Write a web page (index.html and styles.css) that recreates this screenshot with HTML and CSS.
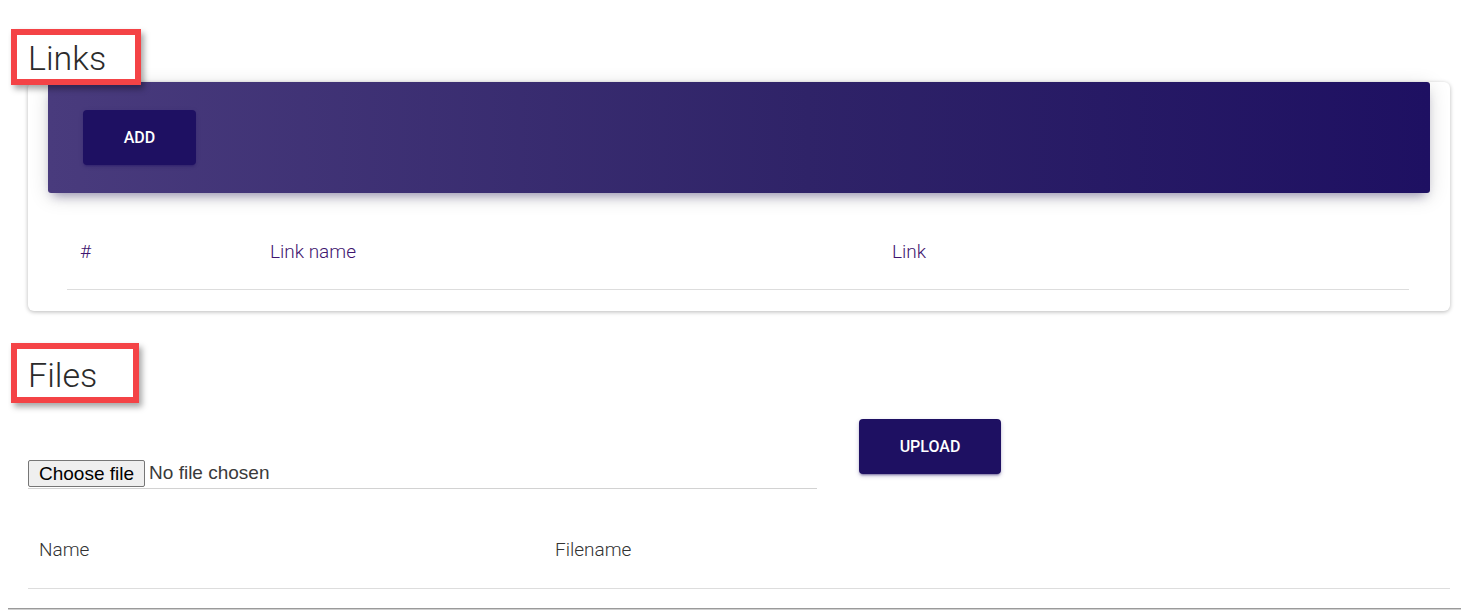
FILE: index.html
```html
<!DOCTYPE html>
<html lang="en">
<head>
<meta charset="utf-8">
<title>Links and Files</title>
<link rel="stylesheet" href="styles.css">
</head>
<body>
<div class="container">
  <h3 class="section-title">Links</h3>
  <div class="card">
    <div class="card-header">
      <button class="btn" type="button">ADD</button>
    </div>
    <div class="card-body">
      <table class="links-table">
        <thead>
          <tr>
            <th class="col-num">#</th>
            <th class="col-name">Link name</th>
            <th class="col-link">Link</th>
          </tr>
        </thead>
      </table>
    </div>
  </div>

  <h3 class="section-title files-title">Files</h3>
  <div class="upload-row">
    <div class="file-field">
      <label class="file-label">
        <input type="file" class="file-input">
        <span class="file-button">Choose file</span>
        <span class="file-status">No file chosen</span>
      </label>
    </div>
    <button class="btn btn-upload" type="button">UPLOAD</button>
  </div>
  <table class="files-table">
    <thead>
      <tr>
        <th class="col-fname">Name</th>
        <th>Filename</th>
      </tr>
    </thead>
  </table>
  <hr class="page-rule">
</div>
</body>
</html>
```

FILE: styles.css
```css
html, body {
  background: #ffffff;
}
body {
  margin: 8px 0 0 8px;
  font-family: Roboto, "Liberation Sans", sans-serif;
  color: #333333;
  overflow: hidden;
}
.container {
  padding: 0 11px 0 20px;
}
.section-title {
  position: relative;
  z-index: 3;
  display: inline-block;
  margin: 21px 0 0 -17px;
  padding: 2px 29px 0 11px;
  border: 6px solid #f44346;
  box-shadow: 3px 4px 6px rgba(0, 0, 0, 0.35);
  background: #ffffff;
  font-family: Roboto, sans-serif;
  font-weight: 300;
  font-size: 34px;
  line-height: 42px;
  color: #2b2b2b;
}
.files-title {
  margin-top: 32px;
  padding: 5px 36px 1px 11px;
}
.card {
  margin-top: 37px;
  background: #ffffff;
  border-radius: 6px;
  box-shadow: 0 1px 4px rgba(0, 0, 0, 0.28);
}
.card-header {
  position: relative;
  z-index: 1;
  margin: -40px 20px 0 20px;
  padding: 28px 35px;
  border-radius: 3px;
  background: linear-gradient(90deg, #493b7d 0%, #2f2368 55%, #1e1062 100%);
  box-shadow: 0 4px 20px 0 rgba(0, 0, 0, 0.14), 0 7px 10px -5px rgba(30, 16, 98, 0.4);
}
.btn {
  display: block;
  width: 113px;
  height: 55px;
  border: none;
  border-radius: 4px;
  background: #1e1062;
  color: #ffffff;
  font-family: Roboto, sans-serif;
  font-weight: 500;
  font-size: 16px;
  cursor: pointer;
  box-shadow: 0 2px 2px 0 rgba(30, 16, 98, 0.14), 0 3px 1px -2px rgba(30, 16, 98, 0.2), 0 1px 5px 0 rgba(30, 16, 98, 0.12);
}
.card-body {
  padding: 15px 41px 21px 39px;
}
table {
  border-collapse: collapse;
}
th {
  text-align: left;
  font-weight: 300;
  font-size: 19px;
  line-height: 27px;
}
.links-table {
  width: 1342px;
}
.links-table th {
  padding: 30px 13px 24px 13px;
  border-bottom: 1px solid #dddddd;
  color: #3f156f;
}
.col-num { width: 164px; }
.col-name { width: 596px; }
.upload-row {
  display: flex;
  align-items: flex-start;
  gap: 42px;
  margin-top: 16px;
}
.file-field {
  width: 789px;
  margin-top: 40px;
  padding-bottom: 1px;
  border-bottom: 1px solid #d2d2d2;
}
.file-label {
  display: flex;
  align-items: center;
  gap: 4px;
  height: 28px;
  font-family: "Liberation Sans", Arial, sans-serif;
  font-size: 19px;
  cursor: pointer;
}
.file-input {
  position: absolute;
  width: 1px;
  height: 1px;
  opacity: 0;
  overflow: hidden;
}
.file-button {
  box-sizing: border-box;
  height: 27px;
  padding: 0 10px;
  border: 1px solid #767676;
  border-radius: 2px;
  background: #efefef;
  color: #000000;
  line-height: 25px;
}
.file-status {
  color: #3a3a3a;
}
.btn-upload {
  width: 142px;
  box-shadow: 0 2px 2px 0 rgba(30, 16, 98, 0.2), 0 3px 1px -2px rgba(30, 16, 98, 0.25), 0 2px 5px 0 rgba(30, 16, 98, 0.2);
}
.files-table {
  width: 1422px;
  margin-top: 21px;
}
.files-table th {
  padding: 26px 11px 25px 11px;
  border-bottom: 1px solid #dddddd;
  color: #333333;
}
.col-fname { width: 494px; }
.page-rule {
  margin: 19px -11px 0 -20px;
  border: none;
  border-top: 1px solid #9a9a9a;
  border-bottom: 1px solid #cfcfcf;
}
```
